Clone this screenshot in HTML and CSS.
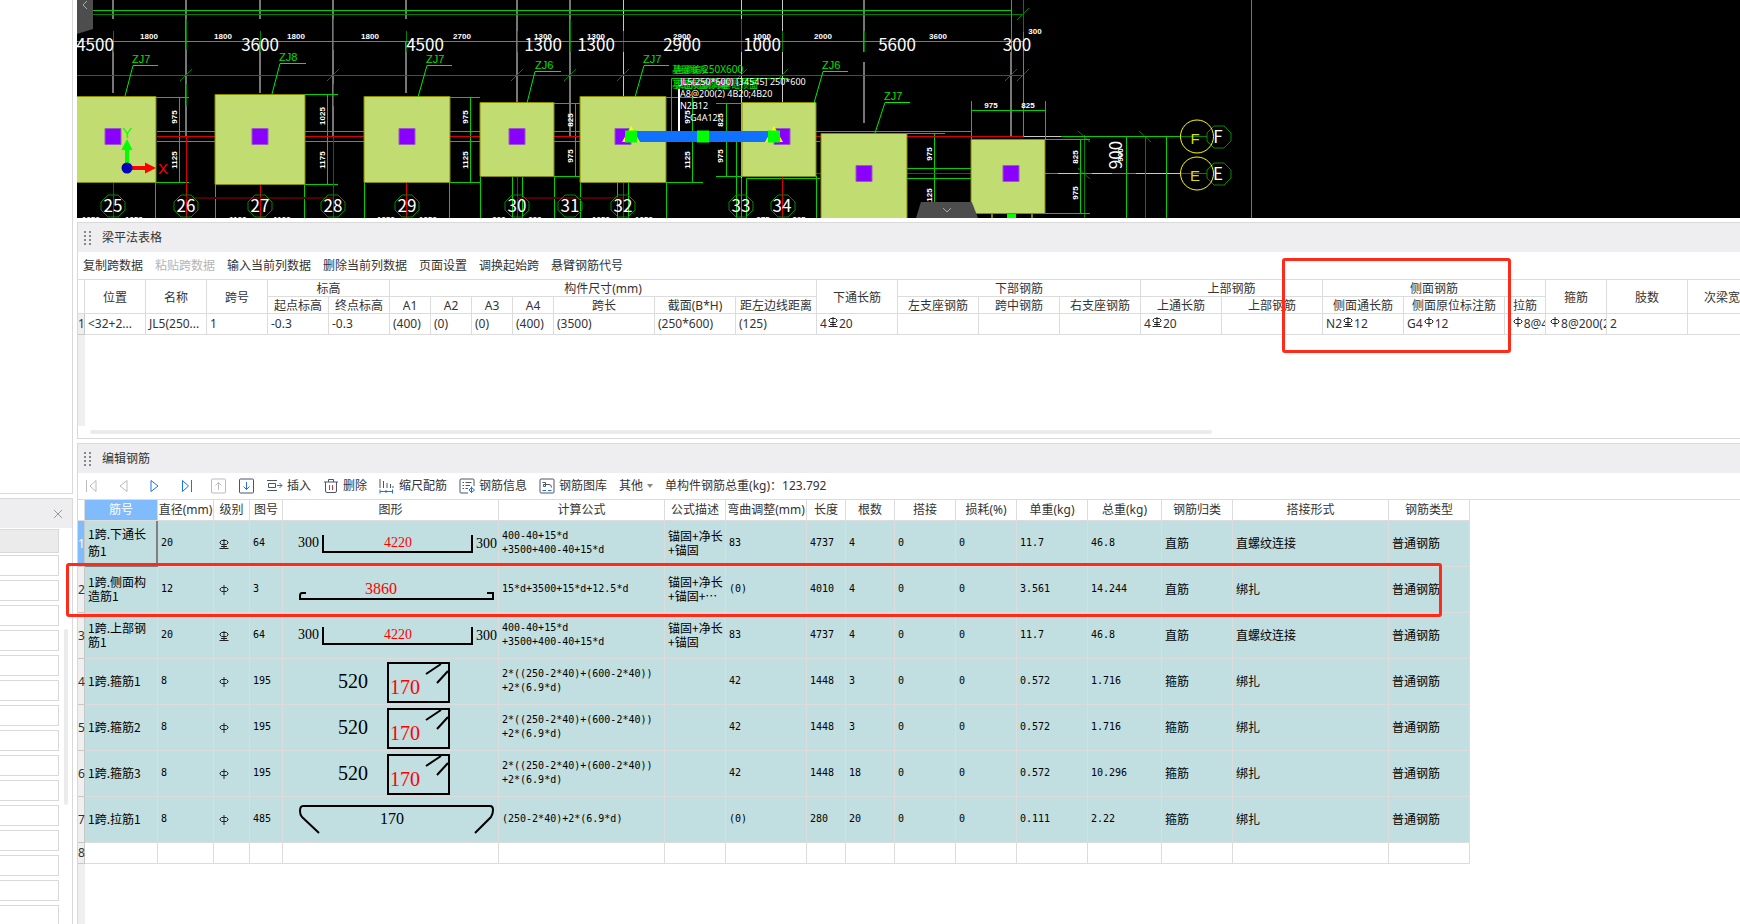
FILE: index.html
```
<!DOCTYPE html>
<html lang="zh-CN">
<head>
  <meta charset="UTF-8">
  <meta name="viewport" content="width=device-width, initial-scale=1.0">
  <title>梁平法表格 - 编辑钢筋</title>
  <link rel="stylesheet" href="styles.css">
</head>
<body>

<!-- shared symbols -->
<svg class="defs" width="0" height="0" aria-hidden="true">
  <symbol id="hpb" viewBox="0 0 10 12"><path d="M5 1V11M2.500 3.500H7.500L9 5V6L7.500 7.500H2.500L1 6V5Z"/></symbol>
  <symbol id="hrb" viewBox="0 0 10 12"><path d="M5 1V10M2.500 2.500H7.500L9 4V5L7.500 6.500H2.500L1 5V4ZM2 8.500H8M0.500 10.500H9.500"/></symbol>
  <symbol id="bar64" viewBox="0 0 215 45">
    <path class="bar" d="M40 14V31H189V14"/>
    <text class="t14" x="15" y="26">300</text>
    <text class="t14 red" x="101" y="26">4220</text>
    <text class="t14" x="193" y="27">300</text>
  </symbol>
  <symbol id="bar3" viewBox="0 0 215 45">
    <path class="bar" d="M23 26H19Q17 26 17 29V32H210V26H204"/>
    <text class="t16 red" x="82" y="27">3860</text>
  </symbol>
  <symbol id="bar195" viewBox="0 0 215 45">
    <path class="bar" d="M105 4H166V43H105ZM143 15L158 5M154 24L165 12"/>
    <text class="t20" x="55" y="29">520</text>
    <text class="t20 red" x="107" y="35">170</text>
  </symbol>
  <symbol id="bar485" viewBox="0 0 215 45">
    <path class="bar" d="M36 36L19 20Q17 18 17 14Q17 9 20 9H207Q210 9 210 13Q210 17 208 20L192 36"/>
    <text class="t16" x="97" y="27">170</text>
  </symbol>
  <symbol id="hept" viewBox="-13 -13 26 26"><path d="M-5 -11H5L12 -4V4L5 11H-5L-12 4V-4Z"/></symbol>
</svg>

<aside class="side">
  <section class="side-top"></section>
  <section class="side-bottom">
    <div class="side-head">
      <button class="close" aria-label="关闭"><svg width="10" height="10"><path d="M1 1L9 9M9 1L1 9"/></svg></button>
    </div>
    <ul class="side-list">
      <li class="first"></li>
      <li></li><li></li><li></li><li></li><li></li>
      <li></li><li></li><li></li><li></li><li></li>
      <li></li><li></li><li></li><li></li><li></li>
    </ul>
    <div class="side-scroll"></div>
  </section>
</aside>

<main>
  <section class="cad">
    <svg class="scene" viewBox="77 0 1663 218" preserveAspectRatio="xMinYMin slice">
      <!-- grid axes -->
      <g class="axis">
        <path d="M113 0V19M113 42V93M260 0V19M260 42V93M406 0V19M406 42V93M186 0V137M333 0V137M517 0V103M570 0V137M864 0V52M864 62V123M1011 52V137"/>
        <path class="thin" d="M623.5 0V97M741.5 0V218M782.5 0V103M1023 136.5H1061M1045 173.5H1180"/>
      </g>
      <g class="dark">
        <path d="M93 14.5H1023M77 75.5H1023M113.5 31V52M186.5 19V50M260.5 31V52M333.5 19V50M406.5 31V52M517.5 31V52M570.5 19V52M623.5 31V52M741.5 19V52M782.5 31V52M864.5 31V52M186.5 84V106M333.5 84V106M1023.5 0V32M1023.5 95V137"/>
        <path d="M180 81L192 69M327 81L339 69M511 81L523 69M564 81L576 69M617 81L629 69M735 81L747 69M776 81L788 69M1005 81L1017 69M1017 81L1029 69M1017 20L1029 8M1078 131L1090 142M1078 168L1090 179M1139 131L1151 142"/>
        <path d="M1084.5 135V218M1145.5 137V218M1180 136.5H1207M1180 173.5H1207"/>
      </g>
      <g class="green">
        <path d="M93 10.5H1011M77 41.5H1023M1011.5 0V52M1023.5 32V137M1011.5 101V123"/>
        <path d="M157 131.5H971M157 141.5H820M907 168.5H971M907 178.5H971"/>
        <path d="M156 97.5H189M156 182.5H189M179.5 97V183M305 94.5H338M305 184.5H338M327.5 94V184M450 97.5H480M450 182.5H480M470.5 97V183M554 103.5H580M554 176.5H580M575.5 103V177M666 97.5H703M666 182.5H703M692.5 97V183M716 103.5H742M716 176.5H742M726.5 103V177"/>
        <path d="M907 133.5H945M934.5 133V218M971 110.5H1045M971.5 101V139M1045.5 101V139M1045 139.5H1090M1045 213.5H1090M1080.5 139V213M1126.5 137V218M1166.5 137V218M1061 136.5H1180M1045 173.5H1058M1078 173.5H1092M1112 173.5H1136"/>
        <path d="M155.5 183V218M215.5 184V218M304.5 184V218M364.5 183V218M449.5 183V218M480.5 176V218M554.5 176V218M580.5 183V218M666.5 183V218M512.5 176V218M522.5 176V218M617.5 183V218M628.5 183V218M736.5 142V218M746.5 218V178.5H820M816.5 176V218M741.5 178V218"/>
      </g>
      <g class="redline">
        <path d="M157 136.5H1023M746 173.5H971M186.5 137V218M333.5 137V218M113.5 183V218M260.5 184V218M406.5 183V218M517.5 176V218M623.5 183V218M782.5 176V218"/>
        <path class="dim" d="M186 198H333M517 198H623"/>
      </g>

      <!-- foundations -->
      <g class="pad">
        <path d="M77 96.5H156V182.5H77M215 94.5H305V184.5H215ZM364 96.5H450V182.5H364ZM480 102.5H554V176.5H480ZM580 96.5H666V182.5H580ZM742 102.5H816V176.5H742ZM821 133.5H907V219H821ZM971 139.5H1045V213.5H971Z"/>
      </g>
      <path class="mast" d="M992 214V218M1032 214V218"/>
      <path class="lime" d="M1007 214H1016V218H1007Z"/>
      <g class="column">
        <path d="M105 128.500h16v16h-16zM252 128.500h16v16h-16zM399 128.500h16v16h-16zM509 128.500h16v16h-16zM615 128.500h16v16h-16zM774 128.500h16v16h-16zM856 165.500h16v16h-16zM1003 165.500h16v16h-16z"/>
      </g>

      <!-- pad marks -->
      <g class="mark">
        <path d="M158 65.500H133L125 96M306 63.500H280L272 94M452 65.500H427L418 97M561 71.500H535L527 103M669 65.500H644L635 97M848 71.500H823L814 103M910 102.500H885L875 133"/>
        <text x="132" y="63">ZJ7</text><text x="279" y="61">ZJ8</text><text x="426" y="63">ZJ7</text>
        <text x="535" y="69">ZJ6</text><text x="643" y="63">ZJ7</text><text x="822" y="69">ZJ6</text><text x="884" y="100">ZJ7</text>
      </g>

      <!-- span dimensions -->
      <g class="span">
        <text x="95" y="51">4500</text><text x="260" y="51">3600</text><text x="425" y="51">4500</text>
        <text x="543" y="51">1300</text><text x="596" y="51">1300</text><text x="682" y="51">2900</text>
        <text x="762" y="51">1000</text><text x="897" y="51">5600</text><text x="1017" y="51">300</text>
        <text transform="translate(1122 155) rotate(-90)">900</text>
      </g>
      <g class="dimtext">
        <text x="149" y="39">1800</text><text x="223" y="39">1800</text><text x="296" y="39">1800</text><text x="370" y="39">1800</text>
        <text x="462" y="39">2700</text><text x="543" y="39">1300</text><text x="596" y="39">1300</text><text x="682" y="39">2900</text>
        <text x="762" y="39">1000</text><text x="823" y="39">2000</text><text x="938" y="39">3600</text><text x="1035" y="34">300</text>
        <text x="991" y="108">975</text><text x="1028" y="108">825</text>
        <text x="91" y="222">1050</text><text x="134" y="222">1050</text><text x="238" y="222">1100</text><text x="282" y="222">1100</text>
        <text x="386" y="222">1050</text><text x="428" y="222">1050</text><text x="499" y="222">900</text><text x="535" y="222">900</text>
        <text x="601" y="222">1050</text><text x="644" y="222">1050</text><text x="763" y="222">975</text><text x="799" y="222">825</text>
        <text transform="translate(177 117) rotate(-90)">975</text><text transform="translate(177 160) rotate(-90)">1125</text>
        <text transform="translate(325 116) rotate(-90)">1025</text><text transform="translate(325 160) rotate(-90)">1175</text>
        <text transform="translate(468 117) rotate(-90)">975</text><text transform="translate(468 160) rotate(-90)">1125</text>
        <text transform="translate(573 120) rotate(-90)">825</text><text transform="translate(573 156) rotate(-90)">975</text>
        <text transform="translate(690 117) rotate(-90)">975</text><text transform="translate(690 160) rotate(-90)">1125</text>
        <text transform="translate(723 120) rotate(-90)">825</text><text transform="translate(723 156) rotate(-90)">975</text>
        <text transform="translate(932 154) rotate(-90)">975</text><text transform="translate(932 197) rotate(-90)">1125</text>
        <text transform="translate(1078 157) rotate(-90)">825</text><text transform="translate(1078 193) rotate(-90)">975</text>
        <text transform="translate(1123 155) rotate(-90)">900</text>
      </g>

      <!-- axis numbers -->
      <g class="bubble">
        <use href="#hept" x="100" y="193" width="26" height="26"/><use href="#hept" x="173" y="193" width="26" height="26"/>
        <use href="#hept" x="247" y="193" width="26" height="26"/><use href="#hept" x="320" y="193" width="26" height="26"/>
        <use href="#hept" x="394" y="193" width="26" height="26"/><use href="#hept" x="504" y="193" width="26" height="26"/>
        <use href="#hept" x="557" y="193" width="26" height="26"/><use href="#hept" x="610" y="193" width="26" height="26"/>
        <use href="#hept" x="728" y="193" width="26" height="26"/><use href="#hept" x="770" y="193" width="26" height="26"/>
        <use href="#hept" x="1206" y="124" width="26" height="26"/><use href="#hept" x="1206" y="161" width="26" height="26"/>
      </g>
      <g class="span">
        <text x="113" y="212">25</text><text x="186" y="212">26</text><text x="260" y="212">27</text><text x="333" y="212">28</text>
        <text x="407" y="212">29</text><text x="517" y="212">30</text><text x="570" y="212">31</text><text x="623" y="212">32</text>
        <text x="741" y="212">33</text><text x="782" y="212">34</text><text x="1218" y="143">F</text><text x="1218" y="180">E</text>
      </g>
      <g class="yellow">
        <circle cx="1197" cy="136.500" r="16.500"/><circle cx="1197" cy="173.500" r="16.500"/>
        <text x="1195" y="144">F</text><text x="1195" y="181">E</text>
      </g>

      <!-- selected beam and its notes -->
      <g class="note">
        <path class="frame" d="M671.500 131V78.500H787"/>
        <path class="stem" d="M679 89V131"/>
        <g class="lime">
          <text x="672" y="73">基础联系</text><text x="674" y="73">连梁编</text><text class="size" x="703" y="73">250X600</text>
          <text x="672" y="88">基础顶面标高</text><text x="675" y="88">梁面标高同基</text><text x="722" y="88">基础顶面</text>
        </g>
        <text class="pink" x="681" y="85">JL5(250*600)</text>
        <text x="680" y="85">JL5(250*600) [34545] 250*600</text>
        <text x="680" y="97">A8@200(2) 4B20;4B20</text>
        <text x="680" y="109">N2B12</text><text x="690" y="121">G4A12</text>
      </g>
      <path class="beam" d="M631 131H774V142H631Z"/>
      <path class="tri" d="M631 126L640 142H622ZM774 126L783 142H765Z"/>
      <path class="lime" d="M625 130.500h12v12h-12zM697 130.500h12v12h-12zM768 130.500h12v12h-12z"/>

      <!-- UCS -->
      <path class="ucs-y" d="M127 168V149"/><path class="lime" d="M127 139L132.500 150H121.500Z"/>
      <path class="ucs-x" d="M127 168H146"/><path class="red" d="M156 168L145 162.500V173.500Z"/>
      <circle class="ucs-o" cx="127" cy="168" r="5.500"/>
      <text class="ucs-t lime" x="127" y="138">Y</text><text class="ucs-t red" x="163" y="174">X</text>

      <path class="limit" d="M1251.500 0V218"/>
    </svg>
    <button class="fold fold-left" aria-label="收起左侧"><svg width="8" height="10"><path d="M6 1L2 5L6 9"/></svg></button>
    <button class="fold fold-bottom" aria-label="收起下方"><svg width="10" height="8"><path d="M1 2L5 6L9 2"/></svg></button>
  </section>

  <section class="panel">
    <h2 class="panel-head"><i class="grip"></i>梁平法表格</h2>
    <div class="toolbar">
      <button>复制跨数据</button>
      <button disabled>粘贴跨数据</button>
      <button>输入当前列数据</button>
      <button>删除当前列数据</button>
      <button>页面设置</button>
      <button>调换起始跨</button>
      <button>悬臂钢筋代号</button>
    </div>
    <div class="table-wrap">
      <table class="span-table">
        <colgroup>
          <col class="w7"><col class="w61"><col class="w61"><col class="w61"><col class="w61"><col class="w61">
          <col class="w41"><col class="w41"><col class="w41"><col class="w41"><col class="w101"><col class="w81"><col class="w81">
          <col class="w81"><col class="w81"><col class="w81"><col class="w81"><col class="w81"><col class="w101">
          <col class="w81"><col class="w101"><col class="w41"><col class="w61"><col class="w81"><col class="w81">
        </colgroup>
        <thead>
          <tr>
            <th rowspan="2"></th><th rowspan="2">位置</th><th rowspan="2">名称</th><th rowspan="2">跨号</th>
            <th colspan="2">标高</th><th colspan="7">构件尺寸(mm)</th><th rowspan="2">下通长筋</th>
            <th colspan="3">下部钢筋</th><th colspan="2">上部钢筋</th><th colspan="3">侧面钢筋</th>
            <th rowspan="2">箍筋</th><th rowspan="2">肢数</th><th rowspan="2">次梁宽度</th>
          </tr>
          <tr>
            <th>起点标高</th><th>终点标高</th><th>A1</th><th>A2</th><th>A3</th><th>A4</th><th>跨长</th><th>截面(B*H)</th><th>距左边线距离</th>
            <th>左支座钢筋</th><th>跨中钢筋</th><th>右支座钢筋</th><th>上通长筋</th><th>上部钢筋</th>
            <th>侧面通长筋</th><th>侧面原位标注筋</th><th>拉筋</th>
          </tr>
        </thead>
        <tbody>
          <tr>
            <th class="num">1</th><td>&lt;32+2...</td><td>JL5(250...</td><td>1</td><td>-0.3</td><td>-0.3</td>
            <td>(400)</td><td>(0)</td><td>(0)</td><td>(400)</td><td>(3500)</td><td>(250*600)</td><td>(125)</td>
            <td>4<svg class="phi"><use href="#hrb"/></svg>20</td><td></td><td></td><td></td>
            <td>4<svg class="phi"><use href="#hrb"/></svg>20</td><td></td>
            <td>N2<svg class="phi"><use href="#hrb"/></svg>12</td>
            <td>G4<svg class="phi"><use href="#hpb"/></svg>12</td>
            <td>(<svg class="phi"><use href="#hpb"/></svg>8@400)</td>
            <td><svg class="phi"><use href="#hpb"/></svg>8@200(2)</td><td>2</td><td></td>
          </tr>
        </tbody>
      </table>
    </div>
    <div class="hscroll"></div>
  </section>

  <section class="panel grow">
    <h2 class="panel-head"><i class="grip"></i>编辑钢筋</h2>
    <div class="toolbar">
      <div class="nav">
        <button disabled aria-label="首行"><svg class="ico"><path d="M3.500 2V14M13 2.500L7 8L13 13.500Z"/></svg></button>
        <button disabled aria-label="上一行"><svg class="ico"><path d="M12 2.500L5 8L12 13.500Z"/></svg></button>
        <button class="blue" aria-label="下一行"><svg class="ico"><path d="M4 2.500L11 8L4 13.500Z"/></svg></button>
        <button class="blue" aria-label="末行"><svg class="ico"><path d="M12.500 2V14M3.500 2.500L9.500 8L3.500 13.500Z"/></svg></button>
        <button disabled aria-label="上移"><svg class="ico"><rect x="0.500" y="1" width="14" height="14" rx="1"/><path d="M7.500 12V4.500M4.500 7.500L7.500 4.500L10.500 7.500"/></svg></button>
      </div>
      <button aria-label="下移"><svg class="ico"><rect x="0.500" y="1" width="14" height="14" rx="1"/><path class="b" d="M7.500 4V11.500M4.500 8.500L7.500 11.500L10.500 8.500"/></svg></button>
      <button><svg class="ico"><path d="M0 2.500H10M1.500 5.500H8.500V9.500H1.500ZM0 12.500H10"/><path class="b" d="M10 7.500H15M12.500 5L15 7.500L12.500 10"/></svg>插入</button>
      <button><svg class="ico"><path d="M1 4H15M5.500 4V1.500H10.500V4M2.500 4V13Q2.500 14.500 4 14.500H12Q13.500 14.500 13.500 13V4"/><path class="r" d="M6.500 7V12M9.500 7V12"/></svg>删除</button>
      <button><svg class="ico"><path d="M1 1V10M4.500 3V10M8 5V10M11.500 6V10M14 8V10"/><path class="b" d="M1 11.500V15.500M13.500 11.500V15.500M1 13.500H13.500M7 12V15"/></svg>缩尺配筋</button>
      <button><svg class="ico"><path d="M9 15H2Q1 15 1 14V2Q1 1 2 1H14Q15 1 15 2V8M3.500 4.500H5M6.500 4.500H12.500M3.500 7.500H5M6.500 7.500H11M3.500 10.500H5M6.500 10.500H9"/><path class="b" d="M12.500 8.500V15M10 12L12.500 9.500L15.500 12L12.500 14.500Z"/></svg>钢筋信息</button>
      <button><svg class="ico"><rect x="1" y="1" width="14" height="14" rx="1"/><path d="M3.500 4.500H6.500V8.500H4.500V6.500H10Q12.500 6.500 12.500 9.500"/><path class="b" d="M3.500 12.500H7M9 12.500H12.500"/></svg>钢筋图库</button>
      <button class="menu">其他<i class="caret"></i></button>
      <span class="total">单构件钢筋总重(kg)：123.792</span>
    </div>
    <div class="table-wrap">
      <table class="bar-table">
        <colgroup>
          <col class="w7"><col class="w73"><col class="w56"><col class="w36"><col class="w33"><col class="w216"><col class="w166">
          <col class="w61"><col class="w81"><col class="w39"><col class="w49"><col class="w61"><col class="w61"><col class="w71">
          <col class="w74"><col class="w71"><col class="w156"><col class="w81">
        </colgroup>
        <thead>
          <tr>
            <th></th><th class="active">筋号</th><th>直径(mm)</th><th>级别</th><th>图号</th><th>图形</th><th>计算公式</th><th>公式描述</th>
            <th>弯曲调整(mm)</th><th>长度</th><th>根数</th><th>搭接</th><th>损耗(%)</th><th>单重(kg)</th><th>总重(kg)</th>
            <th>钢筋归类</th><th>搭接形式</th><th>钢筋类型</th>
          </tr>
        </thead>
        <tbody>
          <tr>
            <th class="num active">1</th><td class="zh current">1跨.下通长<br>筋1</td><td>20</td><td class="grade"><svg class="phi"><use href="#hrb"/></svg></td><td>64</td>
            <td class="shape"><svg><use href="#bar64"/></svg></td><td>400-40+15*d<br>+3500+400-40+15*d</td><td class="zh">锚固+净长<br>+锚固</td>
            <td>83</td><td>4737</td><td>4</td><td>0</td><td>0</td><td>11.7</td><td>46.8</td><td class="zh">直筋</td><td class="zh">直螺纹连接</td><td class="zh">普通钢筋</td>
          </tr>
          <tr>
            <th class="num">2</th><td class="zh">1跨.侧面构<br>造筋1</td><td>12</td><td class="grade"><svg class="phi"><use href="#hpb"/></svg></td><td>3</td>
            <td class="shape"><svg><use href="#bar3"/></svg></td><td>15*d+3500+15*d+12.5*d</td><td class="zh">锚固+净长<br>+锚固+…</td>
            <td>(0)</td><td>4010</td><td>4</td><td>0</td><td>0</td><td>3.561</td><td>14.244</td><td class="zh">直筋</td><td class="zh">绑扎</td><td class="zh">普通钢筋</td>
          </tr>
          <tr>
            <th class="num">3</th><td class="zh">1跨.上部钢<br>筋1</td><td>20</td><td class="grade"><svg class="phi"><use href="#hrb"/></svg></td><td>64</td>
            <td class="shape"><svg><use href="#bar64"/></svg></td><td>400-40+15*d<br>+3500+400-40+15*d</td><td class="zh">锚固+净长<br>+锚固</td>
            <td>83</td><td>4737</td><td>4</td><td>0</td><td>0</td><td>11.7</td><td>46.8</td><td class="zh">直筋</td><td class="zh">直螺纹连接</td><td class="zh">普通钢筋</td>
          </tr>
          <tr>
            <th class="num">4</th><td class="zh">1跨.箍筋1</td><td>8</td><td class="grade"><svg class="phi"><use href="#hpb"/></svg></td><td>195</td>
            <td class="shape"><svg><use href="#bar195"/></svg></td><td>2*((250-2*40)+(600-2*40))<br>+2*(6.9*d)</td><td></td>
            <td>42</td><td>1448</td><td>3</td><td>0</td><td>0</td><td>0.572</td><td>1.716</td><td class="zh">箍筋</td><td class="zh">绑扎</td><td class="zh">普通钢筋</td>
          </tr>
          <tr>
            <th class="num">5</th><td class="zh">1跨.箍筋2</td><td>8</td><td class="grade"><svg class="phi"><use href="#hpb"/></svg></td><td>195</td>
            <td class="shape"><svg><use href="#bar195"/></svg></td><td>2*((250-2*40)+(600-2*40))<br>+2*(6.9*d)</td><td></td>
            <td>42</td><td>1448</td><td>3</td><td>0</td><td>0</td><td>0.572</td><td>1.716</td><td class="zh">箍筋</td><td class="zh">绑扎</td><td class="zh">普通钢筋</td>
          </tr>
          <tr>
            <th class="num">6</th><td class="zh">1跨.箍筋3</td><td>8</td><td class="grade"><svg class="phi"><use href="#hpb"/></svg></td><td>195</td>
            <td class="shape"><svg><use href="#bar195"/></svg></td><td>2*((250-2*40)+(600-2*40))<br>+2*(6.9*d)</td><td></td>
            <td>42</td><td>1448</td><td>18</td><td>0</td><td>0</td><td>0.572</td><td>10.296</td><td class="zh">箍筋</td><td class="zh">绑扎</td><td class="zh">普通钢筋</td>
          </tr>
          <tr>
            <th class="num">7</th><td class="zh">1跨.拉筋1</td><td>8</td><td class="grade"><svg class="phi"><use href="#hpb"/></svg></td><td>485</td>
            <td class="shape"><svg><use href="#bar485"/></svg></td><td>(250-2*40)+2*(6.9*d)</td><td></td>
            <td>(0)</td><td>280</td><td>20</td><td>0</td><td>0</td><td>0.111</td><td>2.22</td><td class="zh">箍筋</td><td class="zh">绑扎</td><td class="zh">普通钢筋</td>
          </tr>
          <tr class="blank">
            <th class="num">8</th><td></td><td></td><td></td><td></td><td></td><td></td><td></td><td></td><td></td><td></td><td></td><td></td><td></td><td></td><td></td><td></td><td></td>
          </tr>
        </tbody>
      </table>
    </div>
  </section>
</main>

<div class="callout callout-side"></div>
<div class="callout callout-row"></div>

</body>
</html>
```
FILE: styles.css
```
* {
  box-sizing: border-box;
}

body {
  margin: 0;
  min-height: 100vh;
  display: flex;
  gap: 4px;
  overflow: hidden;
  position: relative;
  background: #fff;
  color: #333;
  font: 12px/16px "Noto Sans", "Noto Sans CJK SC", sans-serif;
}

.defs {
  position: absolute;
}

button {
  display: flex;
  align-items: center;
  gap: 4px;
  padding: 0;
  border: 0;
  background: none;
  color: inherit;
  font: inherit;
  white-space: nowrap;
  cursor: pointer;
}

button:disabled {
  color: #b4b4b4;
  cursor: default;
}

svg {
  fill: none;
  stroke: none;
}

/* left side */
.side {
  width: 73px;
  flex: none;
  height: 100vh;
  display: flex;
  flex-direction: column;
  gap: 4px;
}

.side-top {
  height: 494px;
  flex: none;
  border-right: 1px solid #d9d9d9;
  border-bottom: 1px solid #d9d9d9;
}

.side-bottom {
  flex: 1;
  min-height: 0;
  overflow: hidden;
  position: relative;
  border-top: 1px solid #d9d9d9;
  border-right: 1px solid #d9d9d9;
}

.side-head {
  height: 29px;
  display: flex;
  align-items: center;
  justify-content: flex-end;
  padding-right: 9px;
  background: #eeeef0;
}

.close svg {
  stroke: #999;
}

.side-list {
  margin: 0;
  padding: 1px 13px 0 0;
  list-style: none;
}

.side-list li {
  height: 21px;
  margin-bottom: 4px;
  border: 1px solid #d9d9d9;
  border-left: 0;
}

.side-list .first {
  height: 24px;
  margin-bottom: 2px;
  background: #ebebeb;
}

.side-scroll {
  position: absolute;
  right: 4px;
  top: 130px;
  width: 4px;
  height: 176px;
  border-radius: 2px;
  background: #ebebeb;
}

main {
  flex: 1;
  min-width: 0;
  height: 100vh;
  display: flex;
  flex-direction: column;
  gap: 4px;
}

/* drawing view */
.cad {
  height: 218px;
  flex: none;
  position: relative;
  overflow: hidden;
  background: #000;
}

.scene {
  display: block;
  width: 100%;
  height: 218px;
}

.axis path { stroke: #777; stroke-width: 2; }
.axis .thin { stroke: #c8c8c8; stroke-width: 1; }
.dark path { stroke: #008000; }
.green path { stroke: #00d000; }
.redline path { stroke: #d80000; }
.redline .dim { stroke: #500000; stroke-width: 2; }
.pad path { fill: #c1dc70; stroke: #8a8a00; }
.column path { fill: #8a00ff; stroke: #9a5cc0; }
.mast { stroke: #ff0; }
.limit { stroke: #00a8a8; }
.lime { fill: #0f0; }
.red { fill: #f00; }
.mark path { stroke: #0e0; }

.mark text {
  fill: #00e000;
  font: 11px "Liberation Sans", sans-serif;
}

.span text {
  fill: #fff;
  font: 17px "Noto Sans CJK SC", "Noto Sans", sans-serif;
  text-anchor: middle;
}

.dimtext text {
  fill: #fff;
  font: bold 8px "Liberation Sans", sans-serif;
  text-anchor: middle;
}

.bubble { stroke: #008a00; }
.yellow circle { stroke: #ff0; }

.yellow text {
  fill: #dd0;
  font: 15px "Liberation Sans", sans-serif;
  text-anchor: middle;
}

.note text {
  fill: #fff;
  font: 9px "Noto Sans", "Noto Sans CJK SC", sans-serif;
}

.note .lime text { fill: #00e800; }
.note .lime .size { font-size: 10px; }
.note .pink { fill: #f0f; }
.note .frame { stroke: #0c0; }
.note .stem { stroke: #fff; stroke-width: 2; }
.beam { fill: #1070ff; }
.tri { fill: #ff0; }
.ucs-x { stroke: #f00; stroke-width: 4; }
.ucs-y { stroke: #0f0; stroke-width: 4; }
.ucs-o { fill: #00b; }

.ucs-t {
  font: 15px "Liberation Sans", sans-serif;
  text-anchor: middle;
}

.fold {
  position: absolute;
  justify-content: center;
  background: #4d4d4d;
}

.fold svg {
  stroke: #aaa;
}

.fold-left {
  left: 0;
  top: 0;
  width: 16px;
  height: 34px;
  align-items: flex-start;
  clip-path: polygon(0 0, 100% 0, 100% 85%, 0 100%);
}

.fold-bottom {
  left: 839px;
  bottom: 0;
  width: 62px;
  height: 16px;
  clip-path: polygon(8% 0, 90% 0, 100% 100%, 0 100%);
}

/* docked panels */
.panel {
  height: 217px;
  flex: none;
  display: flex;
  flex-direction: column;
  border: 1px solid #d9d9d9;
  border-right: 0;
}

.panel.grow {
  height: auto;
  flex: 1;
  min-height: 0;
  border-bottom: 0;
}

.panel-head {
  margin: 0;
  height: 29px;
  flex: none;
  display: flex;
  align-items: center;
  gap: 10px;
  padding-left: 6px;
  background: #eeeef0;
  font-size: 12px;
  font-weight: normal;
}

.grip {
  width: 8px;
  height: 14px;
  background: repeating-linear-gradient(#888 0 2px, transparent 2px 4px);
  -webkit-mask: linear-gradient(to right, #000 2px, transparent 2px 5px, #000 5px 7px, transparent 7px);
  mask: linear-gradient(to right, #000 2px, transparent 2px 5px, #000 5px 7px, transparent 7px);
}

.toolbar {
  height: 27px;
  flex: none;
  display: flex;
  align-items: center;
  gap: 12px;
  padding-left: 5px;
}

.grow .toolbar {
  height: 26px;
}

.nav {
  display: flex;
  gap: 16px;
}

.ico {
  width: 16px;
  height: 16px;
  stroke: #4a5568;
}

button:disabled .ico { stroke: #bbb; }
.blue .ico, .ico .b { stroke: #1a73e8; }
.ico .r { stroke: #e03030; }

.caret {
  border: 3px solid transparent;
  border-top: 4px solid #888;
  border-bottom: 0;
}

.table-wrap {
  flex: 1;
  min-height: 0;
  overflow: hidden;
  border-top: 1px solid #dcdcdc;
  background: linear-gradient(to right, #efefef 7px, #fff 7px);
}

.hscroll {
  width: 1122px;
  height: 4px;
  flex: none;
  margin: 4px 0 4px 12px;
  border-radius: 2px;
  background: #ebebeb;
}

table {
  width: 0;
  table-layout: fixed;
  border-collapse: separate;
  border-spacing: 0;
}

th, td {
  padding: 0;
  border-right: 1px solid #dcdcdc;
  border-bottom: 1px solid #dcdcdc;
  overflow: hidden;
  white-space: nowrap;
}

th {
  background: #fff;
  font-weight: normal;
  text-align: center;
}

td {
  padding-left: 3px;
}

.num {
  background: #efefef;
  border-color: #c8c8c8;
  overflow: visible;
  text-align: left;
}

.w7 { width: 7px; }
.w33 { width: 33px; }
.w36 { width: 36px; }
.w39 { width: 39px; }
.w41 { width: 41px; }
.w49 { width: 49px; }
.w56 { width: 56px; }
.w61 { width: 61px; }
.w71 { width: 71px; }
.w73 { width: 73px; }
.w74 { width: 74px; }
.w81 { width: 81px; }
.w101 { width: 101px; }
.w156 { width: 156px; }
.w166 { width: 166px; }
.w216 { width: 216px; }

.span-table thead tr { height: 17px; }
.span-table tbody tr { height: 21px; }

.span-table thead th {
  padding-top: 2px;
  line-height: 14px;
}

.phi {
  width: 10px;
  height: 12px;
  margin: 0 1px;
  stroke: #222;
}

.bar-table tr { height: 21px; }
.bar-table tbody tr { height: 46px; }
.bar-table tbody .blank { height: 21px; }

.bar-table td {
  padding-bottom: 2px;
  background: #c1dee0;
  color: #000;
  font: 10px/14px "DejaVu Sans Mono", monospace;
}

.bar-table .zh {
  font: 12px/14px "Noto Sans CJK SC", sans-serif;
}

.bar-table .blank td {
  background: #fff;
}

.bar-table .active {
  background: #80bcfc;
  color: #fff;
}

.bar-table .current {
  border-right: 2px solid #808080;
  border-bottom: 2px solid #808080;
  line-height: 17px;
}

.bar-table .grade {
  padding-left: 4px;
  padding-bottom: 0;
}

.bar-table .shape {
  padding: 0;
}

.grade .phi {
  display: block;
}

.shape svg {
  display: block;
  width: 215px;
  height: 45px;
}

.bar {
  stroke: #000;
  stroke-width: 2;
}

.t14, .t16, .t20 {
  fill: #000;
  font: 14px "Liberation Serif", serif;
}

.t16 { font-size: 16px; }
.t20 { font-size: 20px; }
text.red { fill: #f00; }

/* red marks over the tables */
.callout {
  position: absolute;
  border: 3px solid #ff2a1a;
  border-radius: 3px;
  pointer-events: none;
}

.callout-side {
  left: 1282px;
  top: 258px;
  width: 229px;
  height: 95px;
}

.callout-row {
  left: 66px;
  top: 563px;
  width: 1376px;
  height: 54px;
}
```
